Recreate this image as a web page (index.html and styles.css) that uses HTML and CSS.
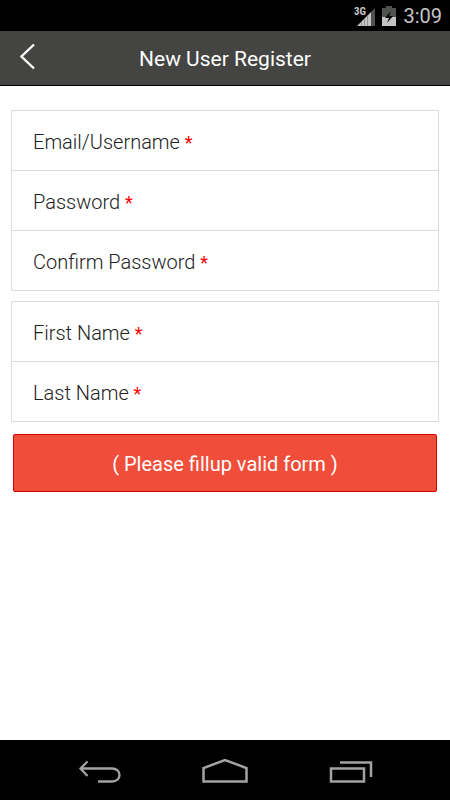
FILE: index.html
```html
<!DOCTYPE html>
<html lang="en">
<head>
<meta charset="utf-8">
<meta name="viewport" content="width=device-width, initial-scale=1">
<title>New User Register</title>
<link rel="stylesheet" href="styles.css">
</head>
<body>
<div class="status-bar">
  <svg class="signal" width="24" height="22" viewBox="0 0 24 22" role="img" aria-label="3G signal">
    <path d="M18 6 22 2v18h-4z" fill="#505250"/>
    <path d="M4 20 18 6v14z" fill="#c4c4c4"/>
    <path d="M8.500 16v4M11.500 13v7M14.500 10v10" stroke="#929292" stroke-width="1"/>
    <path d="M0 0H13V10H0z" fill="#000"/>
    <text class="network" x="1" y="9">3G</text>
  </svg>
  <svg class="battery" width="14" height="20" viewBox="0 0 14 20" role="img" aria-label="Battery charging">
    <path d="M4 0h6v2h4v9H0V2h4z" fill="#505250"/>
    <path d="M0 11h14v9H0z" fill="#c4c4c4"/>
    <path d="M9 5 3 12h4l-2 5 6-7H7z" fill="#000"/>
  </svg>
  <span class="clock">3:09</span>
</div>
<header class="title-bar">
  <button class="back" type="button" aria-label="Back">
    <svg width="18" height="28" viewBox="0 0 18 28"><path d="M16 1.500 3.500 13.500 16 25.500" fill="none" stroke="#fff" stroke-width="2.400"/></svg>
  </button>
  <h1 class="title">New User Register</h1>
</header>
<main class="content">
  <form class="form">
    <div class="group">
      <div class="field"><label for="email">Email/Username <span class="required">*</span></label><input id="email" type="text"></div>
      <div class="field"><label for="password">Password <span class="required">*</span></label><input id="password" type="password"></div>
      <div class="field"><label for="confirm">Confirm Password <span class="required">*</span></label><input id="confirm" type="password"></div>
    </div>
    <div class="group">
      <div class="field"><label for="first">First Name <span class="required">*</span></label><input id="first" type="text"></div>
      <div class="field"><label for="last">Last Name <span class="required">*</span></label><input id="last" type="text"></div>
    </div>
    <button class="submit" type="button">( Please fillup valid form )</button>
  </form>
</main>
<nav class="nav-bar">
  <button type="button" aria-label="Back">
    <svg width="48" height="30" viewBox="0 0 48 30"><path d="M5 10.500H37C47 10.500 47 23.500 37 23.500H23M12.500 3.500 5.500 10.500 12.500 18" fill="none" stroke="#a3a3a3" stroke-width="2.300"/></svg>
  </button>
  <button type="button" aria-label="Home">
    <svg width="48" height="30" viewBox="0 0 48 30"><path d="M2.500 23.500V10L24 2 45.500 10V23.500z" fill="none" stroke="#a3a3a3" stroke-width="2.500"/></svg>
  </button>
  <button type="button" aria-label="Recent apps">
    <svg width="48" height="30" viewBox="0 0 48 30"><path d="M4 10.500H37V23.500H4zM13 4.500H44V19" fill="none" stroke="#a3a3a3" stroke-width="2.500"/></svg>
  </button>
</nav>
</body>
</html>
```
FILE: styles.css
```css
* {
  box-sizing: border-box;
}

body {
  display: flex;
  flex-direction: column;
  min-height: 100vh;
  margin: 0;
  background: #fff;
  color: #222;
  font-family: Roboto, "Liberation Sans", sans-serif;
}

button {
  padding: 0;
  border: 0;
  background: none;
  font: inherit;
}

svg {
  display: block;
}

.status-bar {
  display: flex;
  align-items: center;
  justify-content: flex-end;
  height: 31px;
  padding-right: 8px;
  background: #000;
}

.network {
  fill: #c4c4c4;
  font-family: "Roboto Condensed", Roboto, sans-serif;
  font-size: 11px;
  font-weight: 700;
}

.signal {
  margin: 2px 5px 0 0;
}

.battery {
  margin-right: 7px;
}

.clock {
  color: #c4c4c4;
  font-size: 20px;
  line-height: 24px;
}

.title-bar {
  display: grid;
  grid-template-columns: 56px 1fr 56px;
  align-items: center;
  height: 55px;
  border-bottom: 1px solid #000;
  background: #444542;
}

.back {
  display: flex;
  padding: 10px 18px 12px;
}

.title {
  margin: 0;
  padding-top: 2px;
  color: #fff;
  font-size: 21px;
  font-weight: 400;
  line-height: 28px;
  text-align: center;
}

.content {
  flex: 1;
  padding: 24px 11px;
}

.form {
  display: flex;
  flex-direction: column;
  gap: 10px;
}

.group {
  border: 1px solid #dcdcdc;
  border-bottom: 0;
}

.field {
  display: flex;
  align-items: center;
  height: 60px;
  padding: 4px 21px 0;
  border-bottom: 1px solid #dcdcdc;
}

.field label {
  font-size: 20px;
  font-weight: 300;
  line-height: 24px;
  white-space: nowrap;
}

.required {
  color: #f00;
  font-size: 18px;
  font-weight: 400;
}

.field input {
  flex: 1;
  min-width: 0;
  height: 40px;
  padding: 0 8px;
  border: 0;
  outline: 0;
  background: none;
  font: inherit;
}

.submit {
  height: 58px;
  margin: 2px;
  padding-top: 2px;
  border: 1px solid #d40000;
  border-radius: 2px;
  background: #f04e3a;
  color: #fff;
  font-size: 20px;
  line-height: 24px;
}

.nav-bar {
  display: flex;
  align-items: center;
  justify-content: space-between;
  height: 60px;
  padding: 5px 75px 0;
  background: #000;
}
```
